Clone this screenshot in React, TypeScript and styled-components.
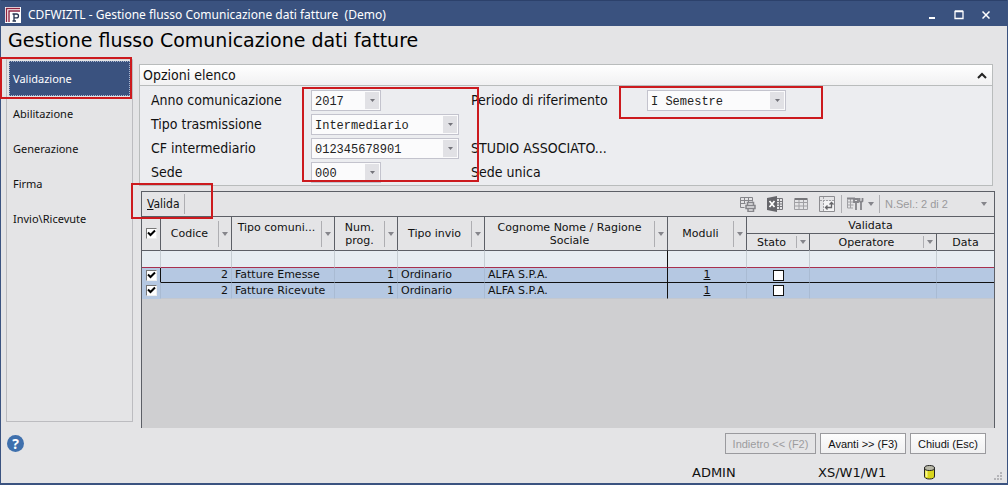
import React from 'react';
import styled, { createGlobalStyle } from 'styled-components';

const GlobalStyle = createGlobalStyle`
  *, *::before, *::after { box-sizing: border-box; }
  body { margin: 0; }
  button, input, select { font: inherit; color: inherit; margin: 0; }
`;

const ui = '"DejaVu Sans Condensed", "DejaVu Sans", sans-serif';
const navFont = '"Noto Sans", "Open Sans", sans-serif';
const wide = '"DejaVu Sans", sans-serif';

const Window = styled.div`
  display: flex;
  flex-direction: column;
  min-height: 100vh;
  background: #e4e4e6;
  border: solid #3b5380;
  border-width: 0 1px 2px 1px;
  color: #111;
  font: 14px/18px ${ui};
`;

const TitleBar = styled.header`
  display: flex;
  align-items: center;
  gap: 7px;
  height: 26px;
  padding: 2px 11px 0 4px;
  background: #3a527f;
  border-top: 1px solid #2c416b;
  color: #fff;
  font: 12px/16px ${navFont};
`;

const Caption = styled.span`
  flex: 1;
  white-space: pre;
`;

const CaptionButton = styled.button`
  display: flex;
  width: 20px;
  height: 20px;
  padding: 0;
  border: 0;
  background: none;
  align-items: center;
  justify-content: center;
`;

const Heading = styled.h1`
  margin: 0;
  padding: 2px 7px 6px;
  font: 19px/25px ${wide};
  color: #000;
`;

const Main = styled.main`
  display: flex;
  flex: 1;
  gap: 6px;
  padding: 0 12px 0 5px;
`;

const Sidebar = styled.nav`
  flex: 0 0 127px;
  margin-bottom: 6px;
  padding: 1px 2px;
  border: 1px solid #bcbcc0;
  border-top-color: #d6d6d8;
`;

const NavItem = styled.a<{ $active?: boolean }>`
  position: relative;
  display: flex;
  align-items: center;
  height: 35px;
  padding: 0 4px;
  font: 11px/16px ${navFont};
  text-decoration: none;
  color: ${p => (p.$active ? '#fff' : '#111')};
  background: ${p => (p.$active ? '#3a527f' : 'none')};
  outline: ${p => (p.$active ? '1px dotted #a9b6cf' : 'none')};
  outline-offset: -1px;
`;

const Highlight = styled.span<{ $inset: string; $width?: number; $height?: number }>`
  position: absolute;
  inset: ${p => p.$inset};
  width: ${p => (p.$width ? `${p.$width}px` : 'auto')};
  height: ${p => (p.$height ? `${p.$height}px` : 'auto')};
  z-index: 2;
  border: 2px solid #cc1a1e;
  pointer-events: none;
`;

const Content = styled.div`
  display: flex;
  flex: 1;
  flex-direction: column;
  min-width: 0;
  gap: 5px;
  padding-top: 5px;
`;

const Options = styled.section`
  margin-right: 2px;
  border: 1px solid #b9bcbc;
  background: #ecedf0;
`;

const OptionsHeader = styled.button`
  display: flex;
  align-items: center;
  justify-content: space-between;
  width: 100%;
  height: 21px;
  padding: 0 5px 0 3px;
  border: 0;
  border-bottom: 1px solid #b9bcbc;
  background: linear-gradient(#fff, #f1f1f2);
`;

const OptionsBody = styled.div`
  position: relative;
  display: grid;
  grid-template-columns: 160px 160px 176px 1fr;
  grid-auto-rows: 24px;
  align-items: center;
  padding: 2px 0 1px 11px;
`;

const SelectBox = styled.span<{ $width: number }>`
  position: relative;
  display: flex;
  width: ${p => p.$width}px;
`;

const Select = styled.select`
  appearance: none;
  width: 100%;
  height: 21px;
  padding: 3px 18px 0 3px;
  border: 1px solid #c3c3cd;
  border-radius: 0;
  background: linear-gradient(#e1e1e5, #e1e1e5) right 1px center / 14px 17px no-repeat #fbfbfc;
  color: #222;
  font: 12px/16px "Liberation Mono", monospace;
`;

const SelectArrow = styled.svg`
  position: absolute;
  right: 6px;
  top: 9px;
  pointer-events: none;
`;

const GridPanel = styled.section`
  position: relative;
  display: flex;
  flex: 1;
  flex-direction: column;
  margin-left: 2px;
  border: 1px solid #5c5f66;
  border-bottom: 0;
  background: #cfcfd1;
`;

const Toolbar = styled.div`
  display: flex;
  align-items: center;
  height: 24px;
  padding: 0 2px 0 5px;
  background: #e4e4e6;
  color: #9a9a9c;
  font: 11px/16px "Liberation Sans", sans-serif;
`;

const ToolButton = styled.button`
  display: flex;
  align-items: center;
  padding: 0;
  border: 0;
  background: none;
`;

const ValidateButton = styled(ToolButton)`
  height: 20px;
  padding-right: 4px;
  border-right: 1px solid #aeaeb2;
  color: #111;
  font: 12px/16px ${ui};
`;

const ToolIcons = styled.div`
  display: flex;
  align-items: center;
  gap: 11px;
  margin-left: auto;
  padding-right: 6px;
`;

const ToolGroup = styled.div`
  display: flex;
  align-items: center;
  height: 18px;
  gap: 4px;
  padding: 0 5px;
  border-left: 1px solid #aeaeb2;
`;

const SelectionCount = styled(ToolButton)`
  justify-content: space-between;
  width: 102px;
`;

const DataTable = styled.table`
  width: 100%;
  border-collapse: separate;
  border-spacing: 0;
  table-layout: fixed;
  font: 11px/15px ${wide};
`;

const HeadCell = styled.th`
  height: ${p => (p.rowSpan === 2 ? 34 : 17)}px;
  padding: 0;
  border: solid #5c5f66;
  border-width: 1px 1px 0 0;
  background: #e4e4e6;
  font-weight: normal;
  line-height: 13px;
  &:last-child { border-right: 0; }
`;

const HeadLayout = styled.div<{ $tall?: boolean; $top?: boolean }>`
  display: flex;
  align-items: ${p => (p.$top ? 'flex-start' : 'center')};
  height: ${p => (p.$tall ? 26 : 12)}px;
`;

const HeadText = styled.span`
  flex: 1;
  min-width: 0;
  white-space: nowrap;
`;

const HeadArrow = styled.span`
  display: flex;
  align-items: center;
  justify-content: center;
  align-self: stretch;
  flex: 0 0 13px;
  border-left: 1px solid #aeaeb2;
`;

const FilterCell = styled.td<{ $dark?: boolean }>`
  height: 18px;
  padding: 0;
  border-top: 1px solid #5c5f66;
  border-right: 1px solid ${p => (p.$dark ? '#111' : '#c6cdd3')};
  border-bottom: 1px solid #a8304f;
  background: #e7edf2;
  &:last-child { border-right: 0; }
`;

const Cell = styled.td<{ $current?: boolean; $align?: string; $dark?: boolean }>`
  height: ${p => (p.$current ? 15 : 16)}px;
  padding: 0 3px;
  border-right: 1px solid ${p => (p.$dark ? '#111' : '#a9bbd3')};
  border-bottom: 1px solid ${p => (p.$current ? '#111' : '#c3c8d0')};
  background: #b5c8e2;
  line-height: 14px;
  text-align: ${p => p.$align ?? 'left'};
  white-space: nowrap;
  &:first-child {
    padding: 0;
    border-right-color: ${p => (p.$current ? '#111' : '#a9bbd3')};
    border-bottom-color: #b5c8e2;
  }
  &:last-child { border-right: 0; }
`;

const RowLink = styled.a`
  color: inherit;
`;

const Check = styled.input<{ $flat?: boolean }>`
  appearance: none;
  display: block;
  width: 11px;
  height: 11px;
  margin: 0 auto;
  border: 1px solid;
  border-color: ${p => (p.$flat ? '#111' : '#777 #eee #eee #777')};
  background: #fff;
  &:checked {
    background: center / 9px 9px no-repeat
      url("data:image/svg+xml,%3Csvg xmlns='http://www.w3.org/2000/svg' viewBox='0 0 9 9'%3E%3Cpath d='M1 3.5 3.5 6 8 1.5' fill='none' stroke='%23000' stroke-width='2'/%3E%3C/svg%3E") #fff;
  }
`;

const Actions = styled.footer`
  display: flex;
  align-items: center;
  gap: 4px;
  padding: 5px 21px 0 6px;
`;

const HelpButton = styled.button`
  width: 17px;
  height: 17px;
  margin-right: auto;
  padding: 0;
  border: 0;
  border-radius: 50%;
  background: #3f70ad;
  color: #fff;
  font: bold 14px/17px ${navFont};
`;

const ActionButton = styled.button<{ $width: number }>`
  width: ${p => p.$width}px;
  height: 21px;
  padding: 0;
  border: 1px solid #9a9a9e;
  background: linear-gradient(#fdfdfd, #f0f0f1);
  color: #111;
  font: 11px/16px "Liberation Sans", sans-serif;
  &:disabled {
    background: #e4e4e6;
    color: #9c9c9e;
  }
`;

const StatusBar = styled.div`
  display: flex;
  align-items: center;
  justify-content: flex-end;
  height: 29px;
  padding: 8px 4px 0;
  font: 13px/18px ${wide};
`;

const StatusItem = styled.span<{ $width: number }>`
  width: ${p => p.$width}px;
`;

const Arrow = () => (
  <svg width="6" height="4" viewBox="0 0 6 4" aria-hidden="true">
    <path d="M0 0h6L3 4z" fill="#85858b" />
  </svg>
);

function Combo({ id, label, value, width }: { id: string; label: string; value: string; width: number }) {
  return (
    <>
      <label htmlFor={id}>{label}</label>
      <SelectBox $width={width}>
        <Select id={id} defaultValue={value}>
          <option>{value}</option>
        </Select>
        <SelectArrow width="5" height="3" viewBox="0 0 5 3" aria-hidden="true">
          <path d="M0 0h5L2.500 3z" fill="#73737a" />
        </SelectArrow>
      </SelectBox>
    </>
  );
}

function Head({ children, span, top, arrow = true }: { children: React.ReactNode; span?: boolean; top?: boolean; arrow?: boolean }) {
  return (
    <HeadCell rowSpan={span ? 2 : 1} scope="col">
      <HeadLayout $tall={span} $top={top}>
        <HeadText>{children}</HeadText>
        {arrow && <HeadArrow><Arrow /></HeadArrow>}
      </HeadLayout>
    </HeadCell>
  );
}

const steps = ['Validazione', 'Abilitazione', 'Generazione', 'Firma', 'Invio\\Ricevute'];

const rows = [
  { code: 2, type: 'Fatture Emesse', num: 1, send: 'Ordinario', name: 'ALFA S.P.A.', modules: 1 },
  { code: 2, type: 'Fatture Ricevute', num: 1, send: 'Ordinario', name: 'ALFA S.P.A.', modules: 1 },
];

const columnWidths = [19, 71, 103, 63, 87, 183, 79, 63, 127];

export default function App() {
  return (
    <Window>
      <GlobalStyle />
      <TitleBar>
        <svg width="16" height="16" viewBox="0 0 16 16" aria-hidden="true">
          <path d="M0 0h16v16H0z" fill="#fff" />
          <path d="M1.500 15V1.500H15M4 15V4h11" fill="none" stroke="#8f2440" strokeWidth="1.400" />
          <path d="M6 6h9v9H6z" fill="#fff" />
          <path d="M9 14V7h2.500q2 0 2 1.900t-2 1.900H9M7.500 7H10M7.500 14h3.500" fill="none" stroke="#26344f" strokeWidth="1.300" />
        </svg>
        <Caption>CDFWIZTL - Gestione flusso Comunicazione dati fatture  (Demo)</Caption>
        <CaptionButton aria-label="Riduci">
          <svg width="8" height="10" viewBox="0 0 8 10"><path d="M1 7h6v2H1z" fill="#fff" /></svg>
        </CaptionButton>
        <CaptionButton aria-label="Ingrandisci">
          <svg width="10" height="10" viewBox="0 0 10 10"><path d="M1 1.500h8v7H1zM1 1h8" fill="none" stroke="#fff" strokeWidth="1.300" /></svg>
        </CaptionButton>
        <CaptionButton aria-label="Chiudi">
          <svg width="8" height="8" viewBox="0 0 8 8"><path d="M.5.5l7 7M7.500.5l-7 7" stroke="#fff" strokeWidth="1.500" /></svg>
        </CaptionButton>
      </TitleBar>
      <Heading>Gestione flusso Comunicazione dati fatture</Heading>
      <Main>
        <Sidebar>
          {steps.map((step, i) => (
            <NavItem key={step} href="#" $active={i === 0}>
              {step}
              {i === 0 && <Highlight $inset="-4px -2px -3px -9px" />}
            </NavItem>
          ))}
        </Sidebar>
        <Content>
          <Options>
            <OptionsHeader>
              Opzioni elenco
              <svg width="10" height="7" viewBox="0 0 10 7" aria-hidden="true">
                <path d="M1 6l4-4 4 4" fill="none" stroke="#222" strokeWidth="2" />
              </svg>
            </OptionsHeader>
            <OptionsBody>
              <Combo id="anno" label="Anno comunicazione" value="2017" width={70} />
              <Combo id="periodo" label="Periodo di riferimento" value="I Semestre" width={139} />
              <Combo id="tipo" label="Tipo trasmissione" value="Intermediario" width={148} />
              <span /><span />
              <Combo id="cf" label="CF intermediario" value="012345678901" width={148} />
              <span>STUDIO ASSOCIATO...</span><span />
              <Combo id="sede" label="Sede" value="000" width={70} />
              <span>Sede unica</span><span />
              <Highlight $inset="1px auto 3px 162px" $width={177} />
              <Highlight $inset="0 auto auto 479px" $width={204} $height={33} />
            </OptionsBody>
          </Options>
          <GridPanel>
            <Highlight $inset="-9px auto auto -11px" $width={82} $height={36} />
            <Toolbar>
              <ValidateButton><span><u>V</u>alida</span></ValidateButton>
              <ToolIcons>
                <ToolButton aria-label="Stampa">
                  <svg width="16" height="16" viewBox="0 0 16 16" fill="none" stroke="#85858a">
                    <path d="M.5 1.500h12v4M.5 1.500v10h4M.5 4.500h12M.5 7.500h5M4.500 1.500v6M8.500 1.500v5" />
                    <path d="M7.500 9V6.500h6V9M6 9.500h9v3H6zM8 12.500h5.500v3H8z" strokeWidth="1.500" />
                  </svg>
                </ToolButton>
                <ToolButton aria-label="Esporta in Excel">
                  <svg width="16" height="16" viewBox="0 0 16 16" fill="none">
                    <path d="M0 2l10-2v16L0 14z" fill="#66666b" />
                    <path d="M10 2.500h5.500v11H10M10 5.500h5M10 8h5M10 10.500h5M12.500 3v10" stroke="#77777c" />
                    <path d="M2.500 5l5 6M7.500 5l-5 6" stroke="#fff" strokeWidth="1.700" />
                  </svg>
                </ToolButton>
                <ToolButton aria-label="Tabella">
                  <svg width="14" height="14" viewBox="0 0 14 14" fill="none" stroke="#a0a0a4">
                    <path d="M.5 2h13" stroke="#76767a" strokeWidth="2" />
                    <path d="M.5 2v10.500h13V2M.5 5.500h13M.5 9h13M5 3v9M9.500 3v9" />
                  </svg>
                </ToolButton>
                <ToolButton aria-label="Pivot">
                  <svg width="16" height="16" viewBox="0 0 16 16" fill="none">
                    <path d="M.5.5h15v15H.5z" stroke="#8c8c90" />
                    <path d="M1 4.500h14M4.500 1v14" stroke="#a0a0a4" strokeDasharray="2 1" />
                    <path d="M5 5h10v10H5z" fill="#f4f4f5" />
                    <path d="M7 11.500h5.500V7M10.500 8.500l2-2 2 2M8.500 9.500l-2 2 2 2" stroke="#66666a" strokeWidth="1.300" />
                  </svg>
                </ToolButton>
              </ToolIcons>
              <ToolGroup>
                <ToolButton aria-label="Strumenti">
                  <svg width="17" height="14" viewBox="0 0 17 14" fill="none" stroke="#a0a0a4">
                    <path d="M.5 2.500V11H6M.5 5h6M.5 8h6M3.500 2v9" />
                    <path d="M0 1.500h8" stroke="#85858a" strokeWidth="2" />
                    <path d="M7 2h4v3H7zM9 5v8" stroke="#85858a" strokeWidth="1.800" />
                    <path d="M12.500 1v3l1.300 1.500L15.500 4V1M14 5v8" stroke="#85858a" strokeWidth="1.800" />
                  </svg>
                </ToolButton>
                <Arrow />
              </ToolGroup>
              <ToolGroup>
                <SelectionCount>N.Sel.: 2 di 2<Arrow /></SelectionCount>
              </ToolGroup>
            </Toolbar>
            <DataTable>
              <colgroup>
                {columnWidths.map((w, i) => <col key={i} style={{ width: w }} />)}
                <col />
              </colgroup>
              <thead>
                <tr>
                  <HeadCell rowSpan={2}><Check type="checkbox" defaultChecked aria-label="Seleziona tutto" /></HeadCell>
                  <Head span>Codice</Head>
                  <Head span top>Tipo comuni...</Head>
                  <Head span>Num.<br />prog.</Head>
                  <Head span>Tipo invio</Head>
                  <Head span>Cognome Nome / Ragione<br />Sociale</Head>
                  <Head span>Moduli</Head>
                  <HeadCell colSpan={3}>Validata</HeadCell>
                </tr>
                <tr>
                  <Head>Stato</Head>
                  <Head>Operatore</Head>
                  <Head arrow={false}>Data</Head>
                </tr>
              </thead>
              <tbody>
                <tr>
                  {Array.from({ length: 10 }, (_, i) => <FilterCell key={i} $dark={i === 5} />)}
                </tr>
                {rows.map((r, i) => {
                  const current = i === 0;
                  return (
                    <tr key={r.type}>
                      <Cell $current={current}><Check type="checkbox" defaultChecked aria-label={r.type} /></Cell>
                      <Cell $current={current} $align="right">{r.code}</Cell>
                      <Cell $current={current}>{r.type}</Cell>
                      <Cell $current={current} $align="right">{r.num}</Cell>
                      <Cell $current={current}>{r.send}</Cell>
                      <Cell $current={current} $dark>{r.name}</Cell>
                      <Cell $current={current} $align="center"><RowLink href="#">{r.modules}</RowLink></Cell>
                      <Cell $current={current}><Check $flat type="checkbox" aria-label={`Stato ${r.type}`} /></Cell>
                      <Cell $current={current} />
                      <Cell $current={current} />
                    </tr>
                  );
                })}
              </tbody>
            </DataTable>
          </GridPanel>
        </Content>
      </Main>
      <Actions>
        <HelpButton aria-label="Guida">?</HelpButton>
        <ActionButton $width={91} disabled>Indietro &lt;&lt; (F2)</ActionButton>
        <ActionButton $width={86}>Avanti &gt;&gt; (F3)</ActionButton>
        <ActionButton $width={76}>Chiudi (Esc)</ActionButton>
      </Actions>
      <StatusBar>
        <StatusItem $width={126}>ADMIN</StatusItem>
        <StatusItem $width={106}>XS/W1/W1</StatusItem>
        <svg width="79" height="17" viewBox="0 0 79 17" aria-hidden="true">
          <path d="M.5 4v8q0 3 5 3t5-3V4z" fill="#d9d51c" stroke="#222" />
          <path d="M2.500 6v7" stroke="#f8f68a" strokeWidth="2" />
          <ellipse cx="5.500" cy="4" rx="5" ry="2.500" fill="#b9b9a8" stroke="#222" />
          <path d="M76 8h2v2h-2zM76 11h2v2h-2zM76 14h2v2h-2zM73 11h2v2h-2zM73 14h2v2h-2zM70 14h2v2h-2z" fill="#b4b4b8" />
        </svg>
      </StatusBar>
    </Window>
  );
}
